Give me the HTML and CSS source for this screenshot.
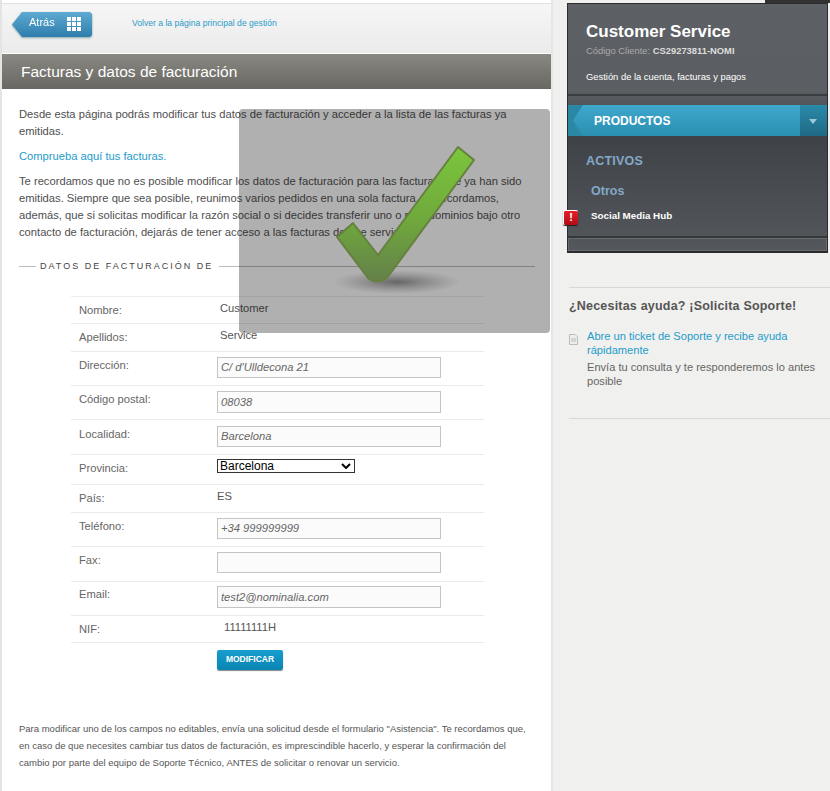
FILE: index.html
```html
<!DOCTYPE html>
<html lang="es">
<head>
<meta charset="utf-8">
<title>Facturas y datos de facturación</title>
<link rel="stylesheet" href="styles.css">
</head>
<body>
<div class="page">
  <main class="main">
    <div class="topbar">
      <a class="back"><span class="back-shape"><span class="back-label">Atrás</span>
        <svg class="grid-icon" width="14" height="14" viewBox="0 0 14 14"><g fill="#fff"><rect width="4" height="4"/><rect x="5" width="4" height="4"/><rect x="10" width="4" height="4"/><rect y="5" width="4" height="4"/><rect x="5" y="5" width="4" height="4"/><rect x="10" y="5" width="4" height="4"/><rect y="10" width="4" height="4"/><rect x="5" y="10" width="4" height="4"/><rect x="10" y="10" width="4" height="4"/></g></svg>
      </span></a>
      <a class="toplink">Volver a la página principal de gestión</a>
    </div>
    <h1 class="title">Facturas y datos de facturación</h1>
    <div class="content">
      <p class="para">Desde esta página podrás modificar tus datos de facturación y acceder a la lista de las facturas ya emitidas.</p>
      <p class="para"><a class="link">Comprueba aquí tus facturas.</a></p>
      <p class="para">Te recordamos que no es posible modificar los datos de facturación para las facturas que ya han sido emitidas. Siempre que sea posible, reunimos varios pedidos en una sola factura. Te recordamos, además, que si solicitas modificar la razón social o si decides transferir uno o más dominios bajo otro contacto de facturación, dejarás de tener acceso a las facturas de ese servicio.</p>
      <div class="legend"><span class="legend-text">DATOS DE FACTURACIÓN DE</span></div>
      <div class="form">
        <div class="row h27"><span class="label">Nombre:</span><span class="value">Customer</span></div>
        <div class="row h28"><span class="label">Apellidos:</span><span class="value">Service</span></div>
        <div class="row h34 up"><span class="label">Dirección:</span><span class="input">C/ d'Ulldecona 21</span></div>
        <div class="row h34 up"><span class="label">Código postal:</span><span class="input tall">08038</span></div>
        <div class="row h35 up low"><span class="label">Localidad:</span><span class="input">Barcelona</span></div>
        <div class="row h30"><span class="label">Provincia:</span><span class="select">Barcelona<svg class="caret" width="10" height="6" viewBox="0 0 10 6"><path d="M1 1l4 4 4-4" fill="none" stroke="#000" stroke-width="2"/></svg></span></div>
        <div class="row h28"><span class="label">País:</span><span class="value flush">ES</span></div>
        <div class="row h34 up"><span class="label">Teléfono:</span><span class="input">+34 999999999</span></div>
        <div class="row h35 up"><span class="label">Fax:</span><span class="input"></span></div>
        <div class="row h34 up high"><span class="label">Email:</span><span class="input tall">test2@nominalia.com</span></div>
        <div class="row h27"><span class="label">NIF:</span><span class="value nif">11111111H</span></div>
        <div class="actions"><a class="btn">MODIFICAR</a></div>
      </div>
      <p class="note">Para modificar uno de los campos no editables, envía una solicitud desde el formulario "Asistencia". Te recordamos que, en caso de que necesites cambiar tus datos de facturación, es imprescindible hacerlo, y esperar la confirmación del cambio por parte del equipo de Soporte Técnico, ANTES de solicitar o renovar un servicio.</p>
    </div>
  </main>
  <aside class="side">
    <div class="panel">
      <div class="panel-head">
        <div class="cust">Customer Service</div>
        <div class="code">Código Cliente: <b>CS29273811-NOMI</b></div>
        <div class="manage">Gestión de la cuenta, facturas y pagos</div>
      </div>
      <div class="products"><span class="products-label">PRODUCTOS</span><span class="products-drop"></span></div>
      <div class="panel-body">
        <div class="active">ACTIVOS</div>
        <div class="other">Otros</div>
        <div class="hub">Social Media Hub<span class="alert">!</span></div>
      </div>
      <div class="panel-foot"></div>
    </div>
    <div class="help">
      <h2 class="help-title">¿Necesitas ayuda? ¡Solicita Soporte!</h2>
      <div class="ticket">
        <svg class="doc" width="9" height="11" viewBox="0 0 9 11"><path d="M.5.5h5.5l2.500 2.500v7.500h-8z" fill="#eee" stroke="#bbb"/><path d="M2 5h5M2 7h5" stroke="#bbb"/></svg>
        <div class="ticket-text"><a class="link">Abre un ticket de Soporte y recibe ayuda rápidamente</a><p class="ticket-desc">Envía tu consulta y te responderemos lo antes posible</p></div>
      </div>
    </div>
  </aside>
</div>
<div class="overlay">
  <svg class="check" width="311" height="224" viewBox="0 0 311 224">
    <defs>
      <linearGradient id="cg" x1="0" y1="0" x2="0" y2="1"><stop offset="0" stop-color="#7cc63c"/><stop offset=".55" stop-color="#6fa83c"/><stop offset="1" stop-color="#64804a"/></linearGradient>
      <radialGradient id="sg"><stop offset="0" stop-color="#444" stop-opacity=".7"/><stop offset=".5" stop-color="#555" stop-opacity=".35"/><stop offset="1" stop-color="#666" stop-opacity="0"/></radialGradient>
    </defs>
    <ellipse cx="158" cy="173" rx="64" ry="12" fill="url(#sg)"/>
    <path d="M219 38L235 51L148 169Q138 176 129 169L98 128L114 114L139 146Z" fill="url(#cg)" stroke="#66803f" stroke-width="2" stroke-linejoin="round"/>
  </svg>
</div>
</body>
</html>
```
FILE: styles.css
```css
* { box-sizing: border-box; }
html, body { margin: 0; height: 100%; overflow: hidden; }
body { background: #f0f0ee; font-family: "Liberation Sans", Arial, sans-serif; color: #555; }
.page { display: grid; grid-template-columns: 551px 263px; column-gap: 14px; margin-left: 2px; height: 791px; position: relative; }

.main { background: #fff; border-right: 2px solid #e6e6e6; height: 791px; box-shadow: -2px 0 0 #e4e4e4; }
.topbar { height: 51px; margin-top: 3px; background: linear-gradient(#f6f6f6, #ebebeb); display: flex; align-items: flex-start; border-bottom: 1px solid #fff; box-shadow: inset 0 1px 0 #e2e2e2; }
.back { margin: 9px 0 0 10px; width: 80px; height: 25px; filter: drop-shadow(0 1px 1px #8aa); display: block; }
.back-shape { width: 80px; height: 25px; background: linear-gradient(#5eaad2, #2e7dac); clip-path: polygon(0 50%, 10px 0, 78px 0, 80px 2px, 80px 23px, 78px 25px, 10px 25px); display: flex; align-items: flex-start; padding: 4px 0 0 17px; }
.back-label { font-size: 11px; color: #fff; line-height: 13px; }
.grid-icon { margin: 1px 0 0 12px; }
.toplink { margin: 14px 0 0 40px; font-size: 8.600px; line-height: 12px; color: #2b9cc9; }
.title { margin: 0; height: 35px; background: linear-gradient(#8a8883, #686762); color: #fff; font-weight: 400; font-size: 15.500px; line-height: 35px; padding-left: 19px; }
.content { padding: 17px 16px 0 17px; }
.para { margin: 0 0 8px; font-size: 11.200px; line-height: 17px; color: #4f4f4f; }
.link { color: #1e9ccb; }
.legend { display: flex; align-items: center; margin-top: 19px; height: 12px; }
.legend::before { content: ""; width: 17px; height: 1px; background: #bbb; }
.legend::after { content: ""; flex: 1; height: 1px; background: #bbb; }
.legend-text { font-size: 9px; letter-spacing: 2px; padding: 0 6px 0 4px; color: #444; }

.form { margin: 24px 0 0 52px; width: 413px; border-top: 1px solid #eee; }
.row { display: grid; grid-template-columns: 138px 1fr; border-bottom: 1px solid #eaeaea; padding: 4px 0 0 8px; font-size: 11.200px; align-items: start; }
.up { padding-top: 5px; }
.low { padding-top: 6px; }
.high { padding-top: 4px; }
.h27 { height: 27px; } .h28 { height: 28px; } .h30 { height: 30px; } .h34 { height: 34px; } .h35 { height: 35px; }
.label { color: #666; line-height: 14px; padding-top: 2px; }
.up .label { padding-top: 1px; }
.value { padding-left: 3px; color: #555; line-height: 14px; }
.flush { padding-left: 0; }
.nif { padding-left: 7px; }
.input { height: 21px; width: 224px; border: 1px solid #c4c4c4; background: #fbfbfb; font-style: italic; color: #666; font-size: 11.200px; line-height: 19px; padding-left: 3px; }
.tall { height: 22px; line-height: 20px; }
.select { display: flex; justify-content: space-between; align-items: center; width: 138px; height: 14px; border: 1px solid #333; background: #fff; font-size: 12px; color: #000; padding: 0 3px 0 2px; }
.actions { padding: 7px 0 0 146px; }
.btn { display: block; width: 66px; height: 20px; border-radius: 2px; background: linear-gradient(#169fd0, #0a83b1); box-shadow: 0 1px 1px #888; color: #fff; font-size: 8.500px; font-weight: 700; text-align: center; line-height: 18px; }
.note { margin: 50px 0 0; font-size: 9.500px; line-height: 17px; color: #555; }

.side { padding-top: 3px; position: relative; }
.side::before { content: ""; position: absolute; top: 0; right: 0; width: 65px; height: 3px; background: #333; }
.panel { width: 261px; height: 250px; border: 1px solid #2c2c2c; border-bottom-width: 2px; background: linear-gradient(#5d6064 0, #5b5e62 35%, #3f4347 54%, #54585c 100%); position: relative; }
.panel-head { height: 92px; border-bottom: 2px solid #3a3c3f; padding: 18px 0 0 18px; color: #fff; }
.cust { font-size: 17px; font-weight: 700; line-height: 20px; }
.code { font-size: 9.400px; color: #aaa; line-height: 12px; margin-top: 3px; }
.code b { color: #ddd; }
.manage { font-size: 9.400px; line-height: 12px; margin-top: 14px; }
.products { margin-top: 9px; height: 31px; display: flex; background: #2b88a4; }
.products-label { flex: 1; margin-left: 5px; padding-left: 21px; font-size: 12px; font-weight: 700; color: #fff; line-height: 33px; background: linear-gradient(#3fa8cd, #2a8fb0); clip-path: polygon(0 50%, 10px 0, 100% 0, 100% 100%, 10px 100%); }
.products-drop { width: 27px; background: linear-gradient(#2a8aa9, #1f6a85); position: relative; }
.products-drop::after { content: ""; position: absolute; left: 9px; top: 14px; border: 4px solid transparent; border-top: 5px solid #9cc8d8; border-bottom: 0; }
.panel-body { height: 102px; padding: 18px 0 0 18px; border-bottom: 2px solid #35383b; }
.active { font-size: 12.500px; letter-spacing: .2px; font-weight: 700; color: #84a8c8; line-height: 14px; }
.other { font-size: 12.500px; font-weight: 700; color: #84a8c8; line-height: 15px; margin: 16px 0 0 5px; }
.hub { font-size: 9.800px; font-weight: 700; color: #fff; line-height: 12px; margin: 11px 0 0 5px; }
.alert { position: absolute; left: -5px; top: 206px; width: 15px; height: 15px; border-radius: 2px; background: linear-gradient(#e4202a, #b30c14); box-shadow: 0 1px 1px #222; border: 1px solid #fff; border-width: 1px 0 0 1px; color: #fff; text-align: center; font-size: 11px; line-height: 13px; }
.panel-foot { height: 13px; border: 1px solid #686b6e; }

.help { margin-top: 34px; width: 261px; height: 132px; border-top: 1px solid #d8d8d8; border-bottom: 1px solid #d8d8d8; margin-left: 2px; }
.help-title { margin: 10px 0 0; font-size: 12.500px; line-height: 16px; font-weight: 700; color: #555; letter-spacing: .2px; }
.ticket { display: flex; margin-top: 15px; }
.doc { margin-top: 5px; flex: none; }
.ticket-text { margin-left: 9px; font-size: 11.100px; line-height: 14px; }
.ticket-desc { margin: 3px 0 0; color: #666; }

.overlay { position: absolute; left: 239px; top: 109px; width: 311px; height: 224px; background: rgba(0, 0, 0, .31); border-radius: 4px; }
.check { display: block; }
```
